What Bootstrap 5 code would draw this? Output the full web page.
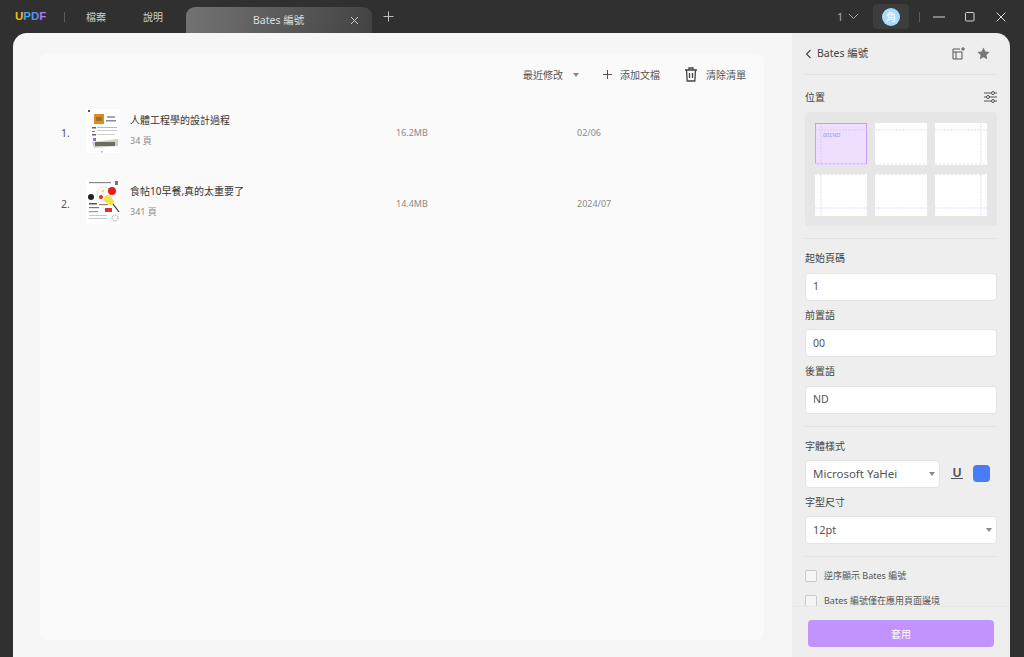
<!DOCTYPE html>
<html lang="zh-Hant">
<head>
<meta charset="utf-8">
<title>UPDF Bates 編號</title>
<link href="https://cdn.jsdelivr.net/npm/bootstrap@5.3.0/dist/css/bootstrap.min.css" rel="stylesheet">
<style>
html,body{height:657px;overflow:hidden}
body{background:#303030;font-family:"Noto Sans","Noto Sans CJK TC",sans-serif;font-size:10px;color:#444;line-height:1.2}
.topbar{height:33px;color:#cfcfcf}
.logo{width:32px;margin-left:15px;font-family:"Liberation Sans",sans-serif;font-size:11.5px;font-weight:700}
.logo b:nth-child(1){color:#f5b90f}.logo b:nth-child(2){color:#39a9e8}.logo b:nth-child(3){color:#5d8fe8}.logo b:nth-child(4){color:#b07cf0}
.vsep{width:1px;height:10px;background:#5c5c5c}
.vsep1{margin-left:17px}
.vsep2{margin:0 3px 0 10px}
.menu-a{width:57px;font-size:10px;margin-top:0}
.menu-a1{margin-left:21px}
.menu-a2{width:43px}
.tabx{width:186px;height:27px;margin-top:7px;border-radius:9px 9px 0 0;background:linear-gradient(100deg,#737373,#434343);padding:0 13px 0 67px;font-size:10.5px;color:#ddd}
.plusx{margin-left:11px}
.pagenum{margin-left:auto;font-size:11px;color:#aaa;width:22px}
.avatarbox{width:36px;height:25px;background:#3d3d3d;border-radius:4px;margin-left:14px}
.avatarx{width:18px;height:18px;border-radius:50%;background:#a9dcfb;color:#fff;font-size:10px}
.winx{width:31px}
.winrow{margin-right:8px}
.mainwin{height:624px;margin:0 14px 0 13px;border-radius:14px 14px 0 0;overflow:hidden}
.leftpane{width:779px;background:#f6f6f6;padding:20px 28px 17px 27px}
.listcard{height:587px;background:#fafafa;border-radius:8px}
.toolrow{height:43px;padding-right:18px;font-size:10px;color:#555}
.docrow{height:71px;margin-left:21px}
.docnum{width:25px;font-size:10.5px;color:#555;margin-top:3px}
.thumbbox{width:34px;height:44px;background:#fff;margin-right:10px;margin-top:-1px;flex:none}
.doctitle{font-size:10px;color:#333;margin-bottom:10px}
.docsub{font-size:9px;color:#8a8a8a}
.doctext{width:266px;margin-top:-3px}
.docsize{width:181px;font-size:9px;color:#8a8a8a;margin-top:4px}
.docdate{font-size:9px;color:#8a8a8a;margin-top:4px}
.sidepanel{width:218px;background:#eeeeee;height:100%}
.sidescroll{flex:1 1 0;min-height:0;overflow:hidden;padding:0 13px}
.sidehead{height:42px;border-bottom:1px solid #e2e2e2;font-size:10.5px;color:#444}
.headtitle{margin-left:5px}
.headicon{margin-left:auto}
.headstar{margin:0 7px 0 12px}
.labelx{font-size:10px;color:#444;height:14px;line-height:14px;margin:7px 0 7.5px}
.labelpos{margin:15px 0 0}
.posgrid{display:grid;grid-template-columns:repeat(3,52px);gap:9px 8px;background:#e6e6e6;border-radius:4px;padding:11px 10px 10px;height:114px;margin-top:8px}
.poscell{display:block;width:52px;height:41.5px;background:#fff}
.sepx{border-top:1px solid #e2e2e2;margin:12px 0 5px}
.fieldx{height:28px;background:#fff;border:1px solid #e4e4e4;border-radius:4px;padding:0 7px;font-size:10.5px;color:#555}
.dropx{font-size:11px;height:27.5px}
.dropfont{width:135px;font-size:11.5px}
.caretx{width:0;height:0;border-left:3px solid transparent;border-right:3px solid transparent;border-top:4px solid #888;margin-left:auto}
.fieldx .caretx{margin-right:-3px}
.toolrow .sortcaret{margin-left:10px}
.uicon{font-family:"Liberation Sans",sans-serif;font-size:12px;font-weight:700;color:#555;border-bottom:1.5px solid #555;line-height:10px;width:12px;text-align:center;margin-left:11px}
.swatchx{width:17px;height:17px;border-radius:4px;background:#4a7cf8;margin-left:10px}
.checkx{width:12px;height:12px;border:1px solid #c9c9c9;border-radius:2px;background:#f5f5f5;margin-right:7px;flex:none}
.checkrow{font-size:9px;color:#555;height:12px;line-height:10px;white-space:nowrap;margin-bottom:13px;flex:none}
.checkfirst{margin-top:8.5px}
.sidefoot{height:51px;border-top:1px solid #e8e8e8;padding:13px 16px 0}
.applybtn{height:27px;width:186px;background:#c293fd;border-radius:4px;color:#fff;font-size:10px}
</style>
</head>
<body>
<header class="topbar d-flex align-items-center">
  <div class="logo"><b>U</b><b>P</b><b>D</b><b>F</b></div>
  <div class="vsep vsep1"></div>
  <div class="menu-a menu-a1">檔案</div>
  <div class="menu-a menu-a2">說明</div>
  <div class="tabx d-flex align-items-center justify-content-between">
    <span>Bates 編號</span>
    <svg width="9" height="9" viewBox="0 0 9 9"><path d="M1 1l7 7M8 1l-7 7" stroke="#ccc" fill="none"/></svg>
  </div>
  <svg class="plusx" width="11" height="11" viewBox="0 0 11 11"><path d="M5.500 .5v10M.5 5.500h10" stroke="#bdbdbd" fill="none"/></svg>
  <div class="pagenum d-flex align-items-center justify-content-between">1
    <svg width="11" height="7" viewBox="0 0 11 7"><path d="M1 1l4.500 4.500L10 1" stroke="#aaa" fill="none"/></svg>
  </div>
  <div class="avatarbox d-flex align-items-center justify-content-center"><div class="avatarx d-flex align-items-center justify-content-center">角</div></div>
  <div class="vsep vsep2"></div>
  <div class="winrow d-flex align-items-center">
    <div class="winx d-flex justify-content-center"><svg width="12" height="2"><path d="M0 1h12" stroke="#d5d5d5"/></svg></div>
    <div class="winx d-flex justify-content-center"><svg width="10" height="10"><rect x=".5" y=".5" width="8.500" height="8.500" rx="1" fill="none" stroke="#d5d5d5"/></svg></div>
    <div class="winx d-flex justify-content-center"><svg width="10" height="10"><path d="M.5 .5l9 9M9.500 .5l-9 9" stroke="#d5d5d5" fill="none"/></svg></div>
  </div>
</header>
<main class="mainwin d-flex">
  <section class="leftpane">
    <div class="listcard">
      <div class="toolrow d-flex align-items-center justify-content-end">
        <span>最近修改</span>
        <span class="caretx sortcaret"></span>
        <svg class="ms-4" width="9" height="9" viewBox="0 0 9 9"><path d="M4.500 0v9M0 4.500h9" stroke="#555" fill="none"/></svg>
        <span class="ms-2">添加文檔</span>
        <svg class="ms-4" width="14" height="15" viewBox="0 0 14 15"><path d="M1 3h12M5 3V1h4v2M2.500 3l.7 11h7.600l.7-11M5.500 6v5M8.500 6v5" stroke="#444" stroke-width="1.300" fill="none"/></svg>
        <span class="ms-2">清除清單</span>
      </div>
      <div class="docrow d-flex align-items-center">
        <div class="docnum">1.</div>
        <svg class="thumbbox" viewBox="0 0 34 44">
          <rect width="34" height="44" fill="#fff"/>
          <rect x="2" y="1" width="2" height="2" fill="#555"/>
          <rect x="8" y="5" width="10" height="10" fill="#d98d22"/><rect x="10" y="8" width="6" height="4" fill="#a0702e"/>
          <rect x="21" y="7" width="8" height="2" fill="#9aa8c0"/><rect x="20" y="11" width="10" height="1.500" fill="#889"/>
          <rect x="6" y="18" width="4" height="1.500" fill="#666"/><rect x="11" y="18" width="20" height="1" fill="#bbb"/><rect x="6" y="22" width="3" height="1" fill="#777"/><rect x="11" y="21" width="20" height="1" fill="#ccc"/><rect x="6" y="25" width="4" height="1.500" fill="#666"/><rect x="11" y="25" width="18" height="1" fill="#ccc"/>
          <path d="M6 33l26-3v7L8 39z" fill="#cfd3c4"/><rect x="9" y="33" width="20" height="4" fill="#333" opacity=".65"/><rect x="7" y="29" width="3" height="3" fill="#9a6bc8"/>
          <rect x="15" y="42" width="2" height="1.500" fill="#f0a0b8"/>
        </svg>
        <div class="doctext">
          <div class="doctitle">人體工程學的設計過程</div>
          <div class="docsub">34 頁</div>
        </div>
        <div class="docsize">16.2MB</div>
        <div class="docdate">02/06</div>
      </div>
      <div class="docrow d-flex align-items-center">
        <div class="docnum">2.</div>
        <svg class="thumbbox" viewBox="0 0 34 44">
          <rect width="34" height="44" fill="#fff"/>
          <rect x="3" y="2" width="22" height="1.200" fill="#888"/><rect x="29" y="1" width="3" height="4" fill="#777"/>
          <circle cx="18" cy="14" r="7" fill="none" stroke="#ccc" stroke-width=".6"/>
          <circle cx="26" cy="11" r="4" fill="#e81c1c"/><circle cx="15" cy="17" r="2" fill="#e82020"/><circle cx="17" cy="11" r="1.600" fill="#f3e34b"/><circle cx="5" cy="17" r="3" fill="#222"/>
          <circle cx="22" cy="19" r="4" fill="#f3e34b"/><circle cx="25" cy="22" r="3" fill="#f3e34b"/>
          <path d="M27 24l6 8" stroke="#333" stroke-width="1.200"/>
          <rect x="3" y="23" width="8" height="1.500" fill="#555"/><rect x="13" y="24" width="9" height="1.200" fill="#888"/><rect x="3" y="27" width="10" height="1.200" fill="#777"/><rect x="3" y="31" width="9" height="1.200" fill="#999"/>
          <rect x="19" y="28" width="7" height="4" fill="#e03030"/>
          <rect x="3" y="35" width="18" height=".8" fill="#bbb"/><rect x="3" y="38" width="18" height=".8" fill="#bbb"/>
          <circle cx="29" cy="38" r="3" fill="none" stroke="#555" stroke-dasharray="1 1" stroke-width=".7"/>
        </svg>
        <div class="doctext">
          <div class="doctitle">食帖10早餐,真的太重要了</div>
          <div class="docsub">341 頁</div>
        </div>
        <div class="docsize">14.4MB</div>
        <div class="docdate">2024/07</div>
      </div>
    </div>
  </section>
  <aside class="sidepanel d-flex flex-column">
    <div class="sidescroll d-flex flex-column">
      <div class="sidehead d-flex align-items-center flex-shrink-0">
        <svg width="7" height="10" viewBox="0 0 7 10"><path d="M5.500 1L1.500 5l4 4" stroke="#444" stroke-width="1.100" fill="none"/></svg>
        <span class="headtitle">Bates 編號</span>
        <svg class="headicon" width="13" height="13" viewBox="0 0 13 13"><path d="M8 2H1v10h9V5M1 5h9M4 5v7M11 0v4M9 2h4" stroke="#555" fill="none"/></svg>
        <svg class="headstar" width="13" height="13" viewBox="0 0 13 13"><path d="M6.500 .5l1.900 3.900 4.100.6-3 3 .7 4.300-3.700-2-3.700 2 .7-4.300-3-3 4.100-.6z" fill="#777"/></svg>
      </div>
      <div class="d-flex align-items-center justify-content-between labelx labelpos flex-shrink-0">
        <span>位置</span>
        <svg width="13" height="12" viewBox="0 0 13 12"><path d="M0 2h13M0 6h13M0 10h13" stroke="#555"/><circle cx="9" cy="2" r="1.500" fill="#eee" stroke="#555"/><circle cx="4" cy="6" r="1.500" fill="#eee" stroke="#555"/><circle cx="9" cy="10" r="1.500" fill="#eee" stroke="#555"/></svg>
      </div>
      <div class="posgrid flex-shrink-0">
        <svg class="poscell" viewBox="0 0 52 41.500"><rect x=".5" y=".5" width="51" height="40.500" fill="#eedfff" stroke="#c79cfc"/><path d="M0 7h52M6 0v41" stroke="#d8bcfb" stroke-width=".7" stroke-dasharray="2 1"/><text x="8" y="14" font-size="5.500" font-family="Liberation Sans" fill="#7f9cf5">001ND</text><path d="M0 41h52" stroke="#eedfff" stroke-dasharray="2 2"/></svg>
        <svg class="poscell" viewBox="0 0 52 41.500"><path d="M0 7h52" stroke="#dcc4fb" stroke-width=".7" stroke-dasharray="2 1"/><path d="M0 41h52" stroke="#e6e6e6" stroke-dasharray="2 2"/></svg>
        <svg class="poscell" viewBox="0 0 52 41.500"><path d="M0 7h52M46 0v41" stroke="#dcc4fb" stroke-width=".7" stroke-dasharray="2 1"/><path d="M0 41h52" stroke="#e6e6e6" stroke-dasharray="2 2"/></svg>
        <svg class="poscell" viewBox="0 0 52 41.500"><path d="M0 34h52M6 0v41" stroke="#dcc4fb" stroke-width=".7" stroke-dasharray="2 1"/><path d="M0 .5h52" stroke="#e6e6e6" stroke-dasharray="2 2"/></svg>
        <svg class="poscell" viewBox="0 0 52 41.500"><path d="M0 34h52" stroke="#dcc4fb" stroke-width=".7" stroke-dasharray="2 1"/><path d="M0 .5h52" stroke="#e6e6e6" stroke-dasharray="2 2"/></svg>
        <svg class="poscell" viewBox="0 0 52 41.500"><path d="M0 34h52M46 0v41" stroke="#dcc4fb" stroke-width=".7" stroke-dasharray="2 1"/><path d="M0 .5h52" stroke="#e6e6e6" stroke-dasharray="2 2"/></svg>
      </div>
      <div class="sepx flex-shrink-0"></div>
      <div class="labelx flex-shrink-0">起始頁碼</div>
      <div class="fieldx d-flex align-items-center flex-shrink-0">1</div>
      <div class="labelx flex-shrink-0">前置語</div>
      <div class="fieldx d-flex align-items-center flex-shrink-0">00</div>
      <div class="labelx flex-shrink-0">後置語</div>
      <div class="fieldx d-flex align-items-center flex-shrink-0">ND</div>
      <div class="sepx flex-shrink-0"></div>
      <div class="labelx flex-shrink-0">字體樣式</div>
      <div class="d-flex align-items-center flex-shrink-0">
        <div class="fieldx dropx dropfont d-flex align-items-center">Microsoft YaHei<span class="caretx"></span></div>
        <div class="uicon">U</div>
        <div class="swatchx"></div>
      </div>
      <div class="labelx flex-shrink-0">字型尺寸</div>
      <div class="fieldx dropx d-flex align-items-center flex-shrink-0">12pt<span class="caretx"></span></div>
      <div class="sepx flex-shrink-0"></div>
      <div class="checkrow checkfirst d-flex align-items-center"><span class="checkx"></span>逆序顯示 Bates 編號</div>
      <div class="checkrow d-flex align-items-center"><span class="checkx"></span>Bates 編號僅在應用頁面邊境</div>
    </div>
    <div class="sidefoot flex-shrink-0">
      <div class="applybtn d-flex align-items-center justify-content-center">套用</div>
    </div>
  </aside>
</main>
<script src="https://cdn.jsdelivr.net/npm/bootstrap@5.3.0/dist/js/bootstrap.bundle.min.js"></script>
</body>
</html>
